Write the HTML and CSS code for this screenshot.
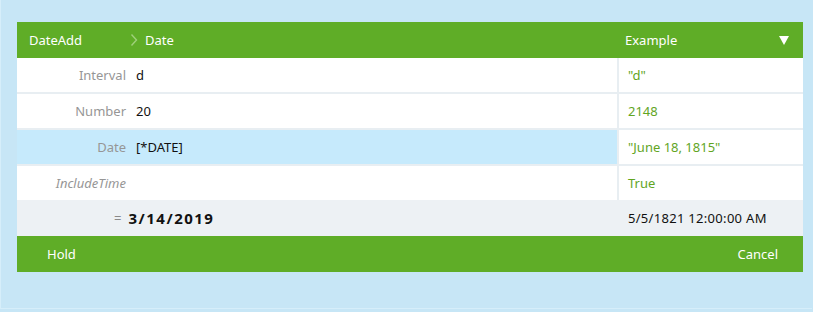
FILE: index.html
```html
<!DOCTYPE html>
<html>
<head>
<meta charset="utf-8">
<link rel="stylesheet" href="styles.css">
</head>
<body>
<div class="frame">
  <div class="panel">
    <div class="head">
      <div class="head-main">
        <span class="title">DateAdd</span>
        <span class="crumb"><svg class="chev" width="8" height="14" viewBox="0 0 8 14"><path d="M1.5 1.5 L6.5 7 L1.5 12.5" fill="none" stroke="#9fd07a" stroke-width="1.4"/></svg>Date</span>
      </div>
      <div class="head-ex">
        <span>Example</span>
        <svg class="tri" width="10" height="9" viewBox="0 0 10 9"><path d="M0 0 H10 L5 9 Z" fill="#fff"/></svg>
      </div>
    </div>
    <div class="row">
      <div class="cell"><span class="lbl">Interval</span><span class="val">d</span></div>
      <div class="ex">"d"</div>
    </div>
    <div class="row">
      <div class="cell"><span class="lbl">Number</span><span class="val">20</span></div>
      <div class="ex">2148</div>
    </div>
    <div class="row">
      <div class="cell sel"><span class="lbl">Date</span><span class="val">[*DATE]</span></div>
      <div class="ex">"June 18, 1815"</div>
    </div>
    <div class="row last">
      <div class="cell"><span class="lbl opt">IncludeTime</span><span class="val"></span></div>
      <div class="ex">True</div>
    </div>
    <div class="result">
      <div class="res-main"><span class="eq">=</span><span class="res">3/14/2019</span></div>
      <div class="res-ex">5/5/1821 12:00:00 AM</div>
    </div>
    <div class="foot">
      <span>Hold</span>
      <span>Cancel</span>
    </div>
  </div>
</div>
</body>
</html>
```
FILE: styles.css
```css
* { box-sizing: border-box; }
html, body { margin: 0; padding: 0; }
body {
  width: 813px;
  height: 312px;
  background: #c7e6f6;
  font-family: "Noto Sans", "Open Sans", sans-serif;
  font-size: 13px;
  color: #111;
}
.frame {
  height: 309px;
  width: 812px;
  border-left: 1px solid #d6eefa;
  border-bottom: 1px solid #d6eefa;
  padding: 22px 0 0 16px;
}
.panel {
  width: 786px;
}
.head {
  height: 36px;
  background: #5fad27;
  color: #fff;
  display: flex;
  align-items: center;
}
.head-main {
  width: 602px;
  display: flex;
  align-items: center;
  padding-left: 12px;
}
.title { width: 101px; }
.crumb { display: flex; align-items: center; gap: 7px; }
.head-ex {
  flex: 1;
  display: flex;
  align-items: center;
  justify-content: space-between;
  padding: 0 14px 0 6px;
}
.tri { margin-top: 1px; }
.row {
  display: flex;
  height: 36px;
  border-bottom: 2px solid #e8eef2;
  background: #fff;
}
.row.last { border-bottom: 0; height: 34px; }
.cell {
  width: 602px;
  display: flex;
  align-items: center;
  border-right: 2px solid #e8eef2;
}
.cell.sel { background: #c6eafc; }
.lbl {
  width: 119px;
  text-align: right;
  color: #969696;
  padding-right: 10px;
}
.lbl.opt { font-style: italic; }
.val { color: #111; }
.ex {
  flex: 1;
  display: flex;
  align-items: center;
  padding-left: 9px;
  color: #62a51f;
}
.result {
  height: 36px;
  background: #edf1f4;
  display: flex;
  align-items: center;
}
.res-main {
  width: 602px;
  display: flex;
  align-items: center;
  padding-left: 97px;
}
.eq { color: #8a8a8a; margin-right: 7px; }
.res { font-weight: bold; font-size: 15px; letter-spacing: 1.5px; }
.res-ex { padding-left: 9px; color: #111; letter-spacing: 0.3px; }
.foot {
  height: 36px;
  background: #5fad27;
  color: #fff;
  display: flex;
  align-items: center;
  justify-content: space-between;
  padding: 0 25px 0 30px;
}
```
